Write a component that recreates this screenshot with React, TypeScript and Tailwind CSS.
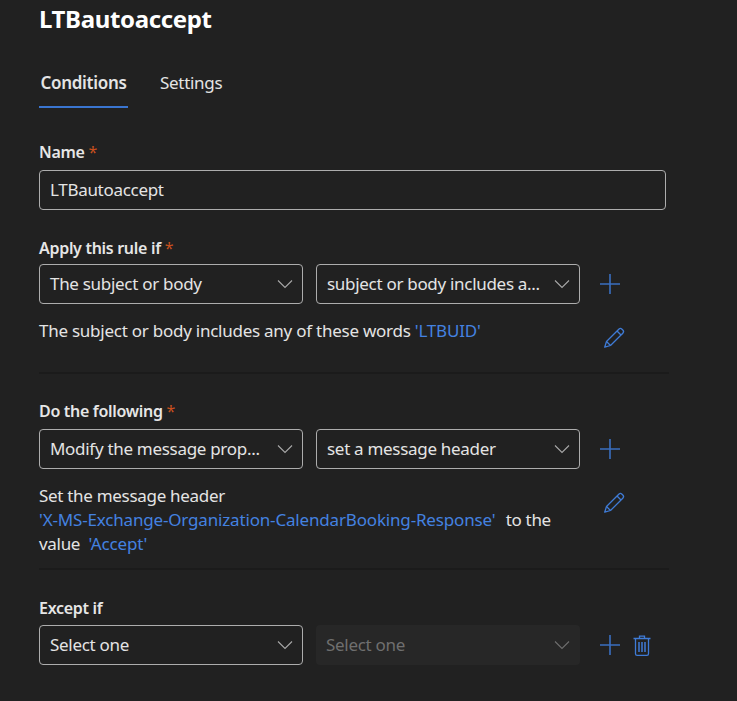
import React from "react";

function Plus() {
  return (
    <svg width="22" height="22" viewBox="0 0 22 22" className="shrink-0 text-[#3a6fc0]">
      <path d="M11 1v20M1 11h20" stroke="currentColor" strokeWidth="1.6" fill="none" />
    </svg>
  );
}

function Pencil() {
  return (
    <svg width="22" height="22" viewBox="0 0 22 22" fill="none" stroke="#3f7bd6" strokeWidth="1.3" strokeLinejoin="round" className="shrink-0">
      <path d="M1.7 20.2 3.5 14.5 15.8 2.2c.9-.9 2.3-.9 3.2 0l.8.8c.9.9.9 2.3 0 3.2L7.5 18.5z" />
      <path d="M14 4l4 4M3.5 14.5l4 4" />
    </svg>
  );
}

function Trash() {
  return (
    <svg width="18" height="21" viewBox="0 0 18 21" fill="none" stroke="#3f7bd6" strokeWidth="1.3" className="shrink-0">
      <path d="M.5 3.5h17M6.5 3.5V1.2h5v2.3M2.5 3.5v15.2c0 .9.7 1.6 1.6 1.6h9.8c.9 0 1.6-.7 1.6-1.6V3.5" />
      <path d="M6 7v10M9 7v10M12 7v10" strokeWidth="1.5" />
    </svg>
  );
}

function Chevron({ dim }: { dim?: boolean }) {
  return (
    <svg width="16" height="10" viewBox="0 0 16 10" fill="none" stroke={dim ? "#6e6e6e" : "#a8a8a8"} strokeWidth="1.1" className="shrink-0">
      <path d="M1 1.5 8 8.5 15 1.5" />
    </svg>
  );
}

function Select({ text, disabled }: { text: string; disabled?: boolean }) {
  return (
    <div
      className={
        disabled
          ? "flex h-10 w-[264px] items-center justify-between rounded-sm bg-[#272727] pl-[10px] pr-[10px] text-[#6f6f6f]"
          : "flex h-10 w-[264px] items-center justify-between rounded-sm border border-[#adadad] pl-[10px] pr-[9px] text-[#e4e4e4]"
      }
    >
      <span className="whitespace-nowrap">{text}</span>
      <Chevron dim={disabled} />
    </div>
  );
}

function Label({ text, required }: { text: string; required?: boolean }) {
  return (
    <div className="h-[22px] text-[16px] font-semibold leading-[22px] tracking-[-0.3px] text-[#e6e6e6]">
      {text}
      {required && <span className="font-normal text-[#c8501e]"> *</span>}
    </div>
  );
}

function Blue({ children }: { children: React.ReactNode }) {
  return <span className="tracking-[-0.17px] text-[#4482e0]">{children}</span>;
}

function Divider() {
  return <div className="h-0.5 w-[630px] bg-[#1b1b1b]" />;
}

function Row({ a, b, bDisabled, trash }: { a: string; b: string; bDisabled?: boolean; trash?: boolean }) {
  return (
    <div className="flex items-center gap-[13px]">
      <Select text={a} />
      <Select text={b} disabled={bDisabled} />
      <div className="ml-[6px] flex items-center gap-[12px]">
        <Plus />
        {trash && <Trash />}
      </div>
    </div>
  );
}

export default function App() {
  return (
    <div className="h-[701px] w-[737px] overflow-hidden bg-[#212121] pl-[39px] font-['Noto_Sans',sans-serif] text-[17px] tracking-[-0.3px] text-[#e4e4e4]">
      <h1 className="h-[40px] pt-[3px] text-[24px] font-bold leading-[32px] tracking-[-0.35px] text-white">LTBautoaccept</h1>

      <div className="mt-[27px] flex h-[41px] items-start gap-[32px]">
        <div className="flex h-[41px] w-[89px] flex-col items-center border-b-2 border-[#3a75d0] pt-[4px] font-semibold leading-[24px] tracking-[-0.3px]">
          Conditions
        </div>
        <div className="pt-[4px] leading-[24px]">Settings</div>
      </div>

      <div className="mt-[33px]"><Label text="Name" required /></div>
      <div className="mt-[7px] flex h-10 w-[627px] items-center rounded-sm border border-[#adadad] pl-[10px]">LTBautoaccept</div>

      <div className="mt-[27px]"><Label text="Apply this rule if" required /></div>
      <div className="mt-[5px]"><Row a="The subject or body" b="subject or body includes a..." /></div>
      <div className="mt-[15px] flex w-[600px] items-start justify-between">
        <div className="leading-[24px] tracking-[-0.25px]">The subject or body includes any of these words <Blue>'LTBUID'</Blue></div>
        <div className="mr-[14px] mt-[8px]"><Pencil /></div>
      </div>
      <div className="mt-[23px]"><Divider /></div>

      <div className="mt-[26px]"><Label text="Do the following" required /></div>
      <div className="mt-[7px]"><Row a="Modify the message prop..." b="set a message header" /></div>
      <div className="mt-[15px] flex w-[600px] items-start justify-between">
        <div className="w-[530px] leading-[24px]">
          Set the message header
          <br />
          <Blue>'X-MS-Exchange-Organization-CalendarBooking-Response'</Blue>&nbsp; <span className="ml-[2px]">to the</span>
          <br />
          value&nbsp; <Blue>'Accept'</Blue>
        </div>
        <div className="mr-[14px] mt-[8px]"><Pencil /></div>
      </div>
      <div className="mt-[12px]"><Divider /></div>

      <div className="mt-[27px]"><Label text="Except if" /></div>
      <div className="mt-[6px]"><Row a="Select one" b="Select one" bDisabled trash /></div>
    </div>
  );
}
